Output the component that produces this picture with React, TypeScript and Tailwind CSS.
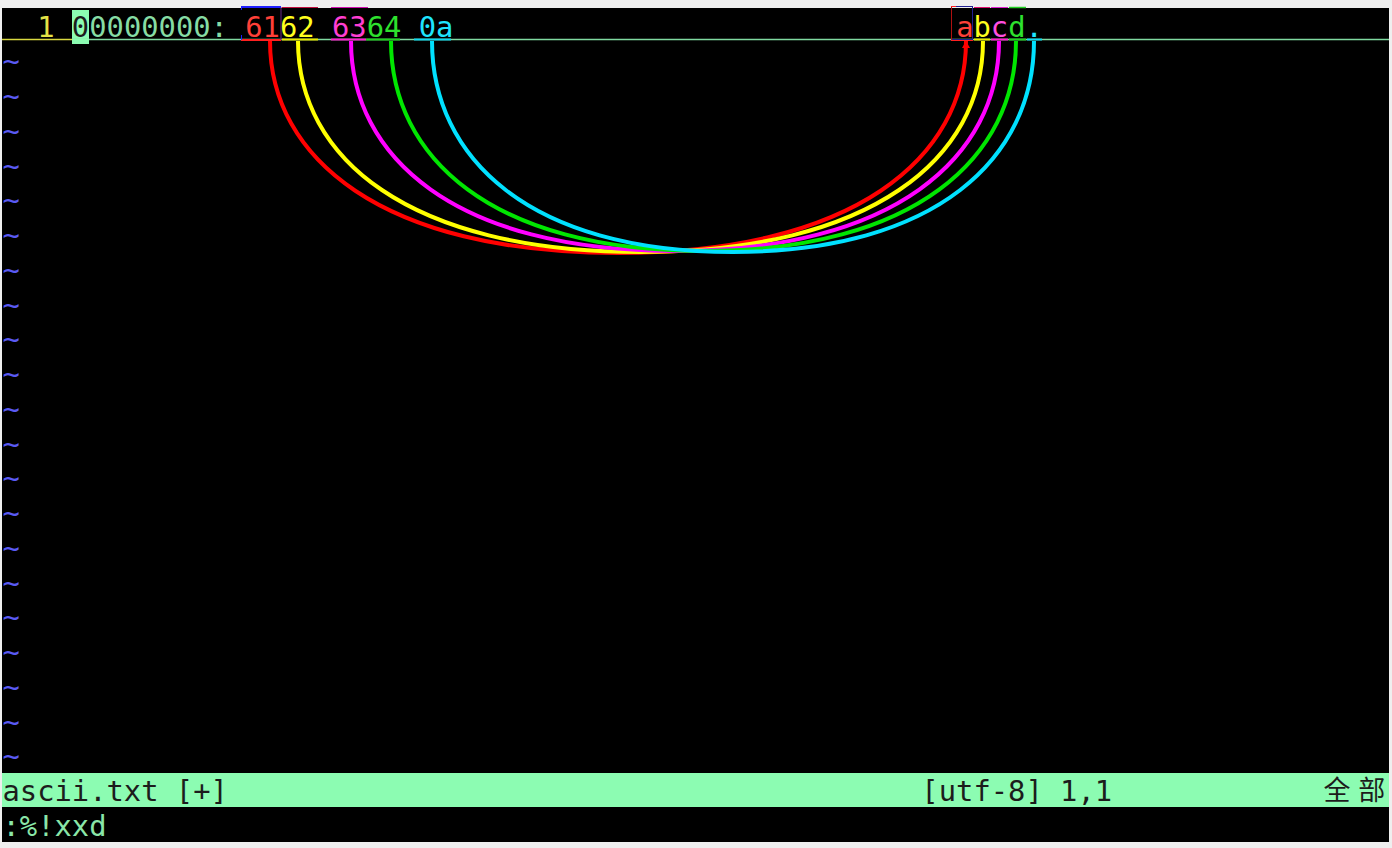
import React from "react";

const FONT = '"DejaVu Sans Mono", "Noto Sans CJK SC", monospace';

type Strand = { x1: number; x2: number; yb: number; color: string };

const strands: Strand[] = [
  { x1: 270, x2: 966, yb: 253, color: "#ff0000" },
  { x1: 298, x2: 983, yb: 252, color: "#ffff00" },
  { x1: 351, x2: 999, yb: 251, color: "#ff00ff" },
  { x1: 391, x2: 1016, yb: 251, color: "#00e600" },
  { x1: 432, x2: 1034, yb: 252, color: "#00e1ff" },
];

function strandPath(s: Strand) {
  const y0 = 41;
  const xm = (s.x1 + s.x2) / 2;
  const hw = (s.x2 - s.x1) / 2;
  const h = s.yb - y0;
  const a = 0.55;
  const b = 0.68;
  return `M${s.x1} ${y0} C${s.x1} ${y0 + a * h} ${xm - b * hw} ${s.yb} ${xm} ${s.yb} C${xm + b * hw} ${s.yb} ${s.x2} ${y0 + a * h} ${s.x2} ${y0}`;
}

function Row({ children, className = "" }: { children?: React.ReactNode; className?: string }) {
  return (
    <div className={`h-[34.75px] leading-[34.75px] whitespace-pre pl-[0.5px] pt-[1.5px] ${className}`}>{children}</div>
  );
}

export default function App() {
  const tildes = Array.from({ length: 21 });
  return (
    <div
      className="relative w-[1392px] h-[848px] bg-[#efefef] overflow-hidden"
      style={{ fontFamily: FONT }}
    >
      <div className="pt-[8px] pl-[2px]">
        <div className="w-[1387px] h-[834px] bg-black text-[28.8px] flex flex-col">
          <Row className="relative">
            <span className="text-[#e3e346]">{"  1 "}</span>
            <span className="bg-[#8cfcb2] text-[#1c1c1c]">0</span>
            <span className="text-[#86dca4]">{"0000000: "}</span>
            <span className="text-[#ff4038]">61</span>
            <span className="text-[#ffff1e]">62</span>
            <span>{" "}</span>
            <span className="text-[#ff3ed2]">63</span>
            <span className="text-[#2ee22e]">64</span>
            <span>{" "}</span>
            <span className="text-[#1ee4ff]">0a</span>
            <span>{"                             "}</span>
            <span className="text-[#ff4038]">a</span>
            <span className="text-[#ffff1e]">b</span>
            <span className="text-[#ff4ee0]">c</span>
            <span className="text-[#2ee22e]">d</span>
            <span className="text-[#1ee4ff]">.</span>
          </Row>
          {tildes.map((_, i) => (
            <Row key={i} className="text-[#5a5af2]">
              ~
            </Row>
          ))}
          <Row className="bg-[#8cfcb2] text-[#1c1c1c] flex">
            <span>{"ascii.txt [+]                                        [utf-8] 1,1"}</span>
            <span className="flex-1" />
            <span className="inline-block w-[34.68px] text-center text-[27px]">全</span>
            <span className="inline-block w-[34.68px] text-center text-[27px]">部</span>
          </Row>
          <Row className="text-[#8ae6a8]">{":%!xxd"}</Row>
        </div>
      </div>

      <svg
        className="absolute left-0 top-0 pointer-events-none"
        width="1392"
        height="848"
        viewBox="0 0 1392 848"
      >
        {/* cursorline underline */}
        <line x1="2" y1="39.5" x2="72" y2="39.5" stroke="#d8d840" strokeWidth="1.5" />
        <line x1="72" y1="39.5" x2="1389" y2="39.5" stroke="#7fd9a0" strokeWidth="1.5" />
        <rect x="72" y="39" width="17" height="5" fill="#8cfcb2" />

        {/* colored underlines under bytes */}
        <line x1="241" y1="40" x2="281" y2="40" stroke="#ff2020" strokeWidth="2" />
        <line x1="282" y1="39.5" x2="318" y2="39.5" stroke="#e8e800" strokeWidth="2" />
        <line x1="331" y1="39.5" x2="366" y2="39.5" stroke="#ff20d0" strokeWidth="2" />
        <line x1="366" y1="39.5" x2="400" y2="39.5" stroke="#20d020" strokeWidth="2" />
        <line x1="414" y1="39.5" x2="451" y2="39.5" stroke="#10d8f0" strokeWidth="2" />
        <line x1="951" y1="40" x2="973" y2="40" stroke="#ff2020" strokeWidth="2" />
        <line x1="974" y1="39.5" x2="990" y2="39.5" stroke="#e8e800" strokeWidth="2" />
        <line x1="991" y1="39.5" x2="1008" y2="39.5" stroke="#ff20d0" strokeWidth="2" />
        <line x1="1009" y1="39.5" x2="1026" y2="39.5" stroke="#20d020" strokeWidth="2" />
        <line x1="1027" y1="39.5" x2="1042" y2="39.5" stroke="#10d8f0" strokeWidth="2" />

        {/* annotation boxes / marks at top */}
        <line x1="241" y1="7" x2="281" y2="7" stroke="#2020ff" strokeWidth="2" />
        <line x1="241.5" y1="7" x2="241.5" y2="10" stroke="#2020ff" strokeWidth="1" />
        <line x1="241.5" y1="35" x2="241.5" y2="40" stroke="#2020ff" strokeWidth="1" />
        <line x1="281" y1="7" x2="281" y2="40" stroke="#6a2a8a" strokeWidth="1" />
        <line x1="282" y1="7.5" x2="318" y2="7.5" stroke="#c01040" strokeWidth="1" />
        <line x1="331" y1="7.5" x2="368" y2="7.5" stroke="#d010b0" strokeWidth="1" />
        <rect x="951.5" y="6.5" width="21" height="33" fill="none" stroke="#202090" strokeWidth="1" />
        <line x1="951.5" y1="6.5" x2="951.5" y2="40" stroke="#b01010" strokeWidth="1" />
        <line x1="951" y1="6.5" x2="956" y2="6.5" stroke="#ff2020" strokeWidth="1" />
        <line x1="974" y1="7.5" x2="990" y2="7.5" stroke="#e01070" strokeWidth="1" />
        <line x1="991" y1="7.5" x2="1008" y2="7.5" stroke="#e020d0" strokeWidth="1" />
        <line x1="1009" y1="7.5" x2="1026" y2="7.5" stroke="#20d020" strokeWidth="1.5" />

        {/* curves */}
        {strands.map((s, i) => (
          <path key={i} d={strandPath(s)} fill="none" stroke={s.color} strokeWidth="4" />
        ))}
        {/* arrow head */}
        <polygon points="966,41 962,48 970,48" fill="#ff0000" />
      </svg>
    </div>
  );
}
